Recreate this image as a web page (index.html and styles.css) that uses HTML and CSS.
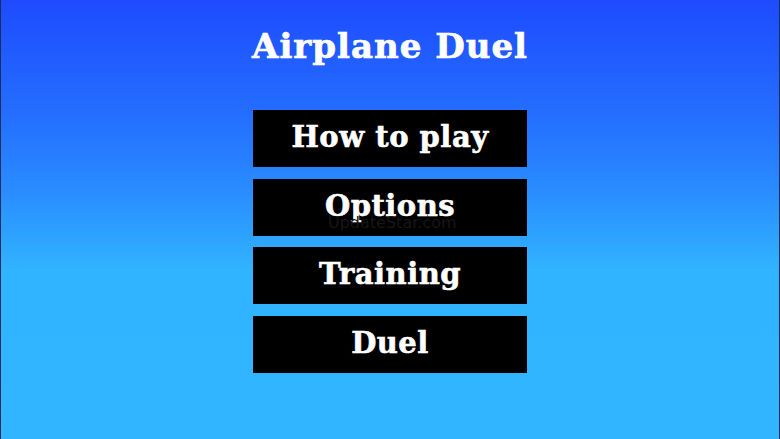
FILE: index.html
```html
<!DOCTYPE html>
<html>
<head>
<meta charset="utf-8">
<link rel="stylesheet" href="styles.css">
</head>
<body>
<main class="screen">
  <h1 class="title">Airplane Duel</h1>
  <nav class="menu">
    <div class="btn">How to play</div>
    <div class="btn btn-mark">Options<span class="mark">UpdateStar.com</span></div>
    <div class="btn">Training</div>
    <div class="btn">Duel</div>
  </nav>
</main>
</body>
</html>
```

FILE: styles.css
```css
html, body {
  margin: 0;
  padding: 0;
  width: 780px;
  height: 439px;
  overflow: hidden;
}
.screen {
  box-sizing: border-box;
  width: 780px;
  height: 439px;
  border-left: 1px solid #1b2c5e;
  border-right: 1px solid #1b2c5e;
  background: linear-gradient(to bottom, #1e4bff 0px, #2470ff 120px, #2a90ff 200px, #31b4ff 272px, #31b5ff 439px);
  display: flex;
  flex-direction: column;
  align-items: center;
  font-family: "DejaVu Serif", serif;
  font-weight: bold;
  color: #fff;
}
.title {
  margin: 25px 0 0 0;
  font-size: 34px;
  line-height: 42px;
  font-weight: bold;
  letter-spacing: 1px;
  -webkit-text-stroke: 0.7px #fff;
}
.menu {
  margin-top: 43px;
  display: flex;
  flex-direction: column;
  gap: 11.5px;
}
.btn {
  position: relative;
  width: 274px;
  height: 57px;
  background: #000;
  display: flex;
  align-items: center;
  justify-content: center;
  padding-bottom: 3px;
  box-sizing: border-box;
  font-size: 29px;
  letter-spacing: 0.5px;
  -webkit-text-stroke: 0.6px #fff;
}
.mark {
  position: absolute;
  left: 75px;
  top: 35px;
  font-family: "DejaVu Sans", sans-serif;
  font-weight: normal;
  font-size: 16px;
  line-height: 17px;
  color: #161616;
  letter-spacing: 0;
  -webkit-text-stroke: 0;
}
```
